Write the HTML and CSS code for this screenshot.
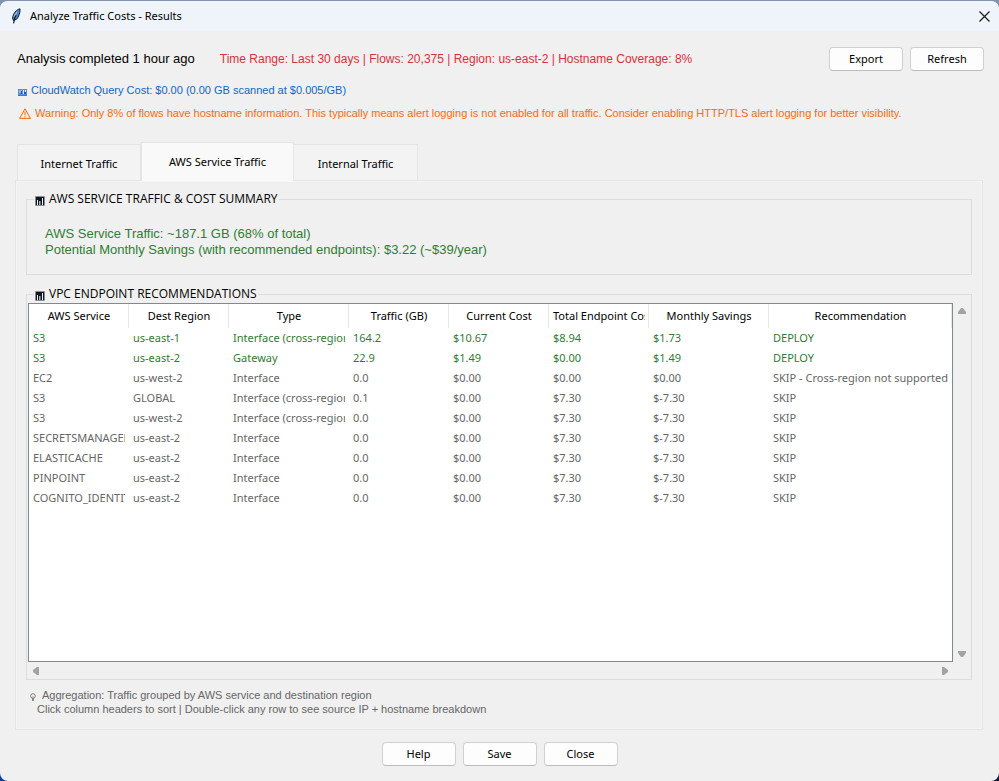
FILE: index.html
```html
<!DOCTYPE html>
<html lang="en">
<head>
<meta charset="utf-8">
<title>Analyze Traffic Costs - Results</title>
<link rel="stylesheet" href="styles.css">
</head>
<body>
<div class="window">
  <header class="titlebar">
    <svg class="feather" viewBox="0 0 10 16" aria-hidden="true"><path d="M9 .8C5.600 1.500 2 5.500 1.600 10L2.400 12.500 5.500 11.300C8 8.500 9.300 4.500 9 .8Z" fill="#4a86c8" stroke="#151b26" stroke-width="1"/><path d="M5 7C4 9 3.300 11 2.600 15.300" fill="none" stroke="#151b26" stroke-width="1.200"/><path d="M3 8.500L6 3.800" stroke="#b9d4ee" stroke-width="1"/></svg>
    <h1>Analyze Traffic Costs - Results</h1>
    <button class="close" type="button" aria-label="Close window"><svg viewBox="0 0 11 11" aria-hidden="true"><path d="M.5.5l10 10M10.500.5l-10 10" stroke="#1b1b1b" stroke-width="1.200"/></svg></button>
  </header>
  <main class="content">
    <div class="status">
      <p class="completed">Analysis completed 1 hour ago</p>
      <p class="range">Time Range: Last 30 days | Flows: 20,375 | Region: us-east-2 | Hostname Coverage: 8%</p>
      <button class="btn" type="button">Export</button>
      <button class="btn" type="button">Refresh</button>
    </div>
    <p class="note cost"><svg class="card-icon" viewBox="0 0 9 8" aria-hidden="true"><path d="M0 1h9v6H0z" fill="#5b8fd0"/><path d="M1 2h3v3H1z" fill="#8fb6e6"/><path d="M5 2h1v4H5zM7 2h1v2H7z" fill="#dceafa"/><path d="M3 3h1v3H3zM6 4h2v2H6z" fill="#1c56a8"/><path d="M0 7h9v1H0z" fill="#3f78c4"/></svg>CloudWatch Query Cost: $0.00 (0.00 GB scanned at $0.005/GB)</p>
    <p class="note warning"><svg class="warn-icon" viewBox="0 0 12 11" aria-hidden="true"><path d="M6 .8L11.400 10.400H.6Z" fill="none" stroke="#ff6600" stroke-width="1"/><path d="M6 3.500v4M6 8.300v1.200" stroke="#ff6600" stroke-width="1"/></svg>Warning: Only 8% of flows have hostname information. This typically means alert logging is not enabled for all traffic. Consider enabling HTTP/TLS alert logging for better visibility.</p>

    <div class="tabs" role="tablist">
      <button class="tab" type="button" role="tab" aria-selected="false">Internet Traffic</button>
      <button class="tab active" type="button" role="tab" aria-selected="true">AWS Service Traffic</button>
      <button class="tab" type="button" role="tab" aria-selected="false">Internal Traffic</button>
    </div>

    <div class="panel" role="tabpanel">
      <section class="group">
        <h2><svg class="chart-icon" viewBox="0 0 10 10" aria-hidden="true"><rect width="10" height="10" rx="1" fill="#8b8b93"/><path d="M1 1h8v8H1z" fill="#11151d"/><path d="M2 4h1v5H2z" fill="#dff3f2"/><path d="M4 5h1v4H4z" fill="#d8a878"/><path d="M5 5h1v4H5z" fill="#3a6fa8"/><path d="M7 2h1v7H7z" fill="#e8f4ff"/></svg>AWS SERVICE TRAFFIC &amp; COST SUMMARY</h2>
        <div class="summary">
          <p>AWS Service Traffic: ~187.1 GB (68% of total)</p>
          <p>Potential Monthly Savings (with recommended endpoints): $3.22 (~$39/year)</p>
        </div>
      </section>

      <section class="group grow">
        <h2><svg class="chart-icon" viewBox="0 0 10 10" aria-hidden="true"><rect width="10" height="10" rx="1" fill="#8b8b93"/><path d="M1 1h8v8H1z" fill="#11151d"/><path d="M2 4h1v5H2z" fill="#dff3f2"/><path d="M4 5h1v4H4z" fill="#d8a878"/><path d="M5 5h1v4H5z" fill="#3a6fa8"/><path d="M7 2h1v7H7z" fill="#e8f4ff"/></svg>VPC ENDPOINT RECOMMENDATIONS</h2>
        <div class="tree">
          <div class="table-box">
            <table>
              <colgroup><col class="c100"><col class="c100"><col class="c120"><col class="c100"><col class="c100"><col class="c100"><col class="c120"><col></colgroup>
              <thead>
                <tr><th><button type="button">AWS Service</button></th><th><button type="button">Dest Region</button></th><th><button type="button">Type</button></th><th><button type="button">Traffic (GB)</button></th><th><button type="button">Current Cost</button></th><th><button type="button">Total Endpoint Cost</button></th><th><button type="button">Monthly Savings</button></th><th><button type="button">Recommendation</button></th></tr>
              </thead>
              <tbody>
                <tr class="deploy"><td>S3</td><td>us-east-1</td><td>Interface (cross-region)</td><td>164.2</td><td>$10.67</td><td>$8.94</td><td>$1.73</td><td>DEPLOY</td></tr>
                <tr class="deploy"><td>S3</td><td>us-east-2</td><td>Gateway</td><td>22.9</td><td>$1.49</td><td>$0.00</td><td>$1.49</td><td>DEPLOY</td></tr>
                <tr><td>EC2</td><td>us-west-2</td><td>Interface</td><td>0.0</td><td>$0.00</td><td>$0.00</td><td>$0.00</td><td>SKIP - Cross-region not supported</td></tr>
                <tr><td>S3</td><td>GLOBAL</td><td>Interface (cross-region)</td><td>0.1</td><td>$0.00</td><td>$7.30</td><td>$-7.30</td><td>SKIP</td></tr>
                <tr><td>S3</td><td>us-west-2</td><td>Interface (cross-region)</td><td>0.0</td><td>$0.00</td><td>$7.30</td><td>$-7.30</td><td>SKIP</td></tr>
                <tr><td>SECRETSMANAGER</td><td>us-east-2</td><td>Interface</td><td>0.0</td><td>$0.00</td><td>$7.30</td><td>$-7.30</td><td>SKIP</td></tr>
                <tr><td>ELASTICACHE</td><td>us-east-2</td><td>Interface</td><td>0.0</td><td>$0.00</td><td>$7.30</td><td>$-7.30</td><td>SKIP</td></tr>
                <tr><td>PINPOINT</td><td>us-east-2</td><td>Interface</td><td>0.0</td><td>$0.00</td><td>$7.30</td><td>$-7.30</td><td>SKIP</td></tr>
                <tr><td>COGNITO_IDENTITY</td><td>us-east-2</td><td>Interface</td><td>0.0</td><td>$0.00</td><td>$7.30</td><td>$-7.30</td><td>SKIP</td></tr>
              </tbody>
            </table>
          </div>
          <div class="scroll vertical">
            <button type="button" aria-label="Scroll up"><svg viewBox="0 0 8 6" width="8" height="6" aria-hidden="true"><path d="M3 0h2l3 4v2H0V4z"/></svg></button>
            <button type="button" aria-label="Scroll down"><svg viewBox="0 0 8 6" width="8" height="6" aria-hidden="true"><path d="M0 0h8v2L5 6H3L0 2z"/></svg></button>
          </div>
          <div class="scroll horizontal">
            <button type="button" aria-label="Scroll left"><svg viewBox="0 0 6 8" width="6" height="8" aria-hidden="true"><path d="M6 0v8H4L0 5V3l4-3z"/></svg></button>
            <button type="button" aria-label="Scroll right"><svg viewBox="0 0 6 8" width="6" height="8" aria-hidden="true"><path d="M0 0h2l4 3v2L2 8H0z"/></svg></button>
          </div>
        </div>
      </section>

      <div class="hint">
        <svg class="bulb" viewBox="0 0 6 8" aria-hidden="true"><circle cx="3" cy="3" r="2.300" fill="#f4f4f4" stroke="#777" stroke-width=".9"/><path d="M2 5h2v3H2z" fill="#888"/><path d="M3 3v3" stroke="#888" stroke-width=".7"/></svg>
        <p>Aggregation: Traffic grouped by AWS service and destination region</p>
        <p class="second">Click column headers to sort | Double-click any row to see source IP + hostname breakdown</p>
      </div>
    </div>

    <footer class="actions">
      <button class="btn" type="button">Help</button>
      <button class="btn" type="button">Save</button>
      <button class="btn" type="button">Close</button>
    </footer>
  </main>
</div>
</body>
</html>
```
FILE: styles.css
```css
* { box-sizing: border-box; }

:root {
  --ui: "Noto Sans", "Open Sans", sans-serif;
  --label: "Liberation Sans", Arial, sans-serif;
  --face: #f0f0f0;
  --line: #dcdcdc;
  --green: #2e7d32;
}

body {
  margin: 0;
  font: 11px/16px var(--ui);
  color: #000;
  background:
    linear-gradient(#7f93aa, #7f93aa) top / 100% 50% no-repeat,
    linear-gradient(to right, #0a3ca0, #14143c);
}

h1, h2, p { margin: 0; font: inherit; }
button { font: inherit; color: inherit; padding: 0; border: 0; background: none; }
svg { display: block; flex: none; }

.window {
  display: flex;
  flex-direction: column;
  min-height: 100vh;
  border-top: 1px solid #7f93aa;
  border-radius: 8px;
  overflow: hidden;
  background: var(--face);
  background-clip: padding-box;
}

.titlebar {
  display: flex;
  align-items: center;
  height: 30px;
  padding: 0 8px 0 11px;
  background: #eff4fb;
}
.feather { width: 10px; height: 16px; margin-right: 9px; }
.close { margin-left: auto; width: 12px; height: 12px; }
.close svg { width: 11px; height: 11px; }

.content {
  display: flex;
  flex: 1;
  flex-direction: column;
  padding: 16px 15px 15px;
}

.status { display: flex; align-items: center; gap: 7px; }
.completed { font: 13px/24px var(--label); margin-left: 2px; margin-right: 18px; }
.range { font: 12px/24px var(--label); color: #dc2f3c; margin-right: auto; }

.btn {
  width: 74px;
  height: 24px;
  border: 1px solid #d0d0d0;
  border-bottom-color: #bcbcbc;
  border-radius: 4px;
  background: #fdfdfd;
}

.note {
  display: flex;
  align-items: center;
  font: 11px/16px var(--label);
}
.cost { margin: 11px 0 7px 3px; color: #0b66cf; }
.warning { margin-left: 4px; color: #ff6a0a; }
.card-icon { width: 9px; height: 8px; margin: 4px 4px 0 0; }
.warn-icon { width: 12px; height: 11px; margin-right: 4px; }

.tabs {
  display: flex;
  align-items: flex-end;
  margin: 21px 0 0 2px;
}
.tab {
  min-width: 124px;
  height: 36px;
  padding: 2px 16px 0;
  border: 1px solid #e5e5e5;
  border-bottom: 0;
  background: #f3f3f3;
}
.tab.active {
  position: relative;
  min-width: 153px;
  height: 39px;
  margin-bottom: -1px;
  padding-top: 0;
  background: #f9f9f9;
}
.tab + .tab:not(.active) { border-left: 0; }

.panel {
  display: flex;
  flex: 1;
  flex-direction: column;
  margin-right: 1px;
  padding: 18px 10px 13px;
  border: 1px solid #e5e5e5;
  box-shadow: inset 0 0 0 1px #f5f5f5;
}

.group {
  margin-bottom: 19px;
  border: 1px solid var(--line);
}
.group h2 {
  display: flex;
  align-items: center;
  width: fit-content;
  height: 18px;
  margin: -10px 0 0 7px;
  padding: 0 1px;
  font: 12px/18px "Open Sans", sans-serif;
  background: var(--face);
}
.chart-icon { width: 10px; height: 10px; margin: 4px 4px 0 0; }

.summary {
  padding: 18px 18px 16px;
  font: 13px/16px var(--label);
  color: var(--green);
}

.grow { display: flex; flex: 1; flex-direction: column; margin-bottom: 8px; }
.tree {
  display: grid;
  flex: 1;
  grid-template: minmax(0, 1fr) 17px / minmax(0, 1fr) 18px;
  padding-left: 1px;
}
.table-box { overflow: hidden; border: 1px solid #828790; background: #fff; }

table { width: 100%; table-layout: fixed; border-collapse: separate; border-spacing: 0; }
.c100 { width: 100px; }
.c120 { width: 120px; }
th { height: 24px; padding: 0 3px 0 4px; border-right: 1px solid #e5e5e5; font-weight: 400; }
th button { display: block; width: 100%; overflow: hidden; white-space: nowrap; text-align: center; }
td {
  height: 20px;
  padding: 0;
  border: 0 solid transparent;
  border-width: 0 4px;
  overflow: hidden;
  white-space: nowrap;
  color: #666;
}
.deploy td { color: var(--green); }

.scroll { display: flex; align-items: center; justify-content: space-between; fill: #a3a3a3; }
.vertical { flex-direction: column; padding: 5px 0; }
.horizontal { padding: 0 5px; }

.hint {
  display: grid;
  grid-template-columns: 6px 1fr;
  column-gap: 6px;
  padding-left: 4px;
  font: 11px/14px var(--label);
  color: #666;
}
.bulb { width: 6px; height: 8px; margin-top: 5px; }
.hint .second { grid-column: 1 / -1; padding-left: 7px; }

.actions { display: flex; justify-content: center; gap: 7px; margin-top: 12px; }
```
